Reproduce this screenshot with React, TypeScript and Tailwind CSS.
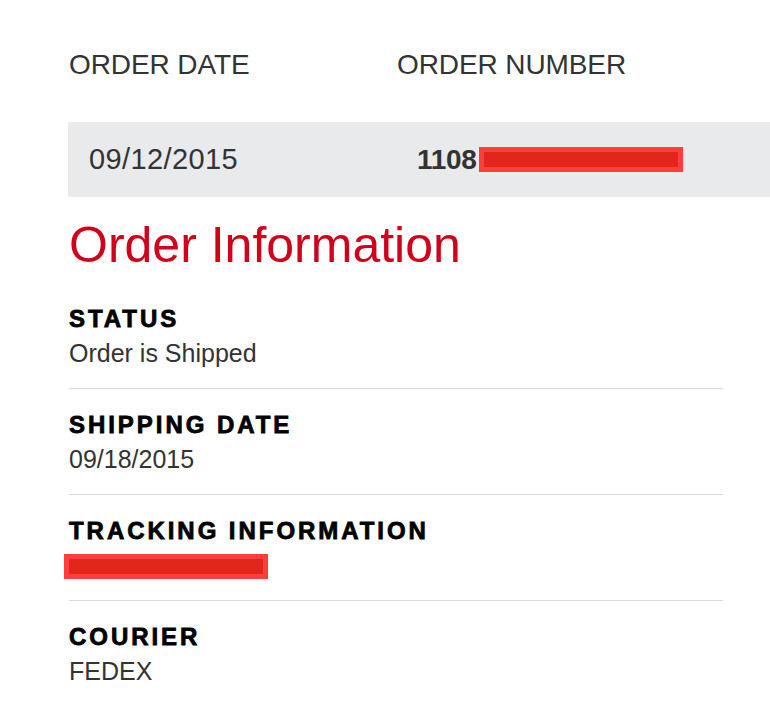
const sections = [
  { label: 'STATUS', value: 'Order is Shipped' },
  { label: 'SHIPPING DATE', value: '09/18/2015' },
  { label: 'TRACKING INFORMATION', value: null },
  { label: 'COURIER', value: 'FEDEX' },
];

function Redacted({ className = '' }: { className?: string }) {
  return <span className={`inline-block h-[25px] w-[204px] border-[5px] border-[#ff3d3a] bg-[#e1261c] ${className}`} />;
}

export default function App() {
  return (
    <div className="min-h-[718px] w-[770px] overflow-hidden bg-white font-['Liberation_Sans',Arial,sans-serif] text-[#333]">
      {/* header labels */}
      <div className="grid grid-cols-[328px_1fr] pl-[69px] pt-[51px] text-[28px] leading-none tracking-[-0.1px]">
        <div>ORDER DATE</div>
        <div>ORDER NUMBER</div>
      </div>

      {/* order row */}
      <div className="ml-[68px] mt-[43px] grid h-[75px] grid-cols-[328px_1fr] items-center bg-[#e9eaec] pl-[21px] text-[28px] leading-none">
        <div className="text-[29px] tracking-[0.4px]">09/12/2015</div>
        <div className="flex items-center">
          <span className="font-bold tracking-[-0.3px]">1108</span>
          <Redacted className="ml-[2px]" />
        </div>
      </div>

      <div className="ml-[69px] w-[654px]">
        <h1 className="mt-[23px] text-[50px] leading-none text-[#d0021b]">Order Information</h1>

        <div className="mt-[13px]">
          {sections.map((s, i) => (
            <div
              key={s.label}
              className={`pb-[22px] pt-[24px] ${i < sections.length - 1 ? 'border-b border-[#dcdcdc]' : ''}`}
            >
              <div className="text-[24px] font-bold leading-none tracking-[2.95px] text-black [-webkit-text-stroke:0.8px_black]">
                {s.label}
              </div>
              <div className="mt-[10px] h-[25px] text-[25px] leading-[25px]">
                {s.value ?? <Redacted className="-ml-[5px] mt-[1px] align-top" />}
              </div>
            </div>
          ))}
        </div>
      </div>
    </div>
  );
}
